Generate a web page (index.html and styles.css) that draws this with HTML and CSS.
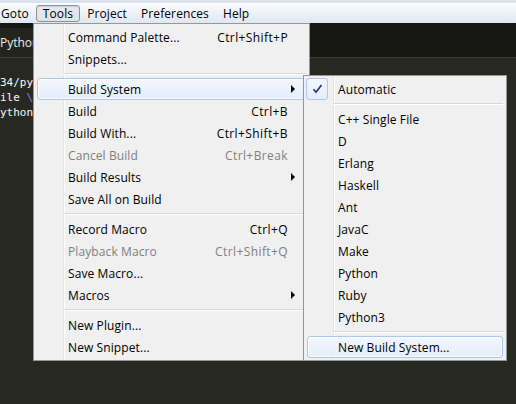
FILE: index.html
```html
<!DOCTYPE html>
<html>
<head>
<meta charset="utf-8">
<link rel="stylesheet" href="styles.css">
</head>
<body>
<div class="menubar">
  <span class="mb-item first">Goto</span>
  <span class="mb-item active">Tools</span>
  <span class="mb-item">Project</span>
  <span class="mb-item">Preferences</span>
  <span class="mb-item">Help</span>
</div>
<div class="tabbar">
  <div class="tab">Python</div>
</div>
<div class="editor">
  <div class="line">34/python</div>
  <div class="line">ile <span class="esc">\</span></div>
  <div class="line">ython</div>
</div>

<div class="menu main">
  <div class="item"><span class="label">Command Palette...</span><span class="key">Ctrl+Shift+P</span></div>
  <div class="item"><span class="label">Snippets...</span></div>
  <div class="sep"></div>
  <div class="item hl"><span class="label">Build System</span><span class="arrow"></span></div>
  <div class="item"><span class="label">Build</span><span class="key">Ctrl+B</span></div>
  <div class="item"><span class="label">Build With...</span><span class="key">Ctrl+Shift+B</span></div>
  <div class="item dis"><span class="label">Cancel Build</span><span class="key">Ctrl+Break</span></div>
  <div class="item"><span class="label">Build Results</span><span class="arrow"></span></div>
  <div class="item"><span class="label">Save All on Build</span></div>
  <div class="sep"></div>
  <div class="item"><span class="label">Record Macro</span><span class="key">Ctrl+Q</span></div>
  <div class="item dis"><span class="label">Playback Macro</span><span class="key">Ctrl+Shift+Q</span></div>
  <div class="item"><span class="label">Save Macro...</span></div>
  <div class="item"><span class="label">Macros</span><span class="arrow"></span></div>
  <div class="sep"></div>
  <div class="item"><span class="label">New Plugin...</span></div>
  <div class="item"><span class="label">New Snippet...</span></div>
</div>

<div class="menu sub">
  <div class="item checked"><span class="check"><svg width="11" height="10" viewBox="0 0 11 10"><path d="M1.5 5.2 L4 8.3 L9.5 1" fill="none" stroke="#1c2d8f" stroke-width="1.6"/></svg></span><span class="label">Automatic</span></div>
  <div class="sep"></div>
  <div class="item"><span class="label">C++ Single File</span></div>
  <div class="item"><span class="label">D</span></div>
  <div class="item"><span class="label">Erlang</span></div>
  <div class="item"><span class="label">Haskell</span></div>
  <div class="item"><span class="label">Ant</span></div>
  <div class="item"><span class="label">JavaC</span></div>
  <div class="item"><span class="label">Make</span></div>
  <div class="item"><span class="label">Python</span></div>
  <div class="item"><span class="label">Ruby</span></div>
  <div class="item"><span class="label">Python3</span></div>
  <div class="sep"></div>
  <div class="item hl"><span class="label">New Build System...</span></div>
</div>
</body>
</html>
```

FILE: styles.css
```css
html, body {
  margin: 0;
  padding: 0;
}
body {
  width: 516px;
  height: 404px;
  overflow: hidden;
  background: #272822;
  font-family: "Open Sans", "Noto Sans", sans-serif;
  font-size: 12px;
  color: #000;
  position: relative;
}
.menubar {
  height: 23px;
  display: flex;
  align-items: center;
  box-sizing: border-box;
  border-top: 3px solid #dae2ed;
  background: linear-gradient(#fbfcfe, #dfe7f2);
  box-shadow: inset 0 1px 0 #ffffff;
}
.mb-item {
  padding: 0 6px;
  height: 17px;
  line-height: 16px;
  box-sizing: border-box;
  border: 1px solid transparent;
  border-radius: 3px;
  letter-spacing: 0.1px;
}
.mb-item.first {
  margin-left: -6px;
}
.mb-item.active {
  border-color: #8d9197;
  background: linear-gradient(#e6ebf1, #dde3ea);
  box-shadow: inset 0 1px 1px rgba(0,0,0,0.12);
}
.tabbar {
  height: 35px;
  background: #171713;
  border-bottom: 1px solid #3c3c37;
  box-sizing: border-box;
  padding-top: 5px;
}
.tab {
  height: 29px;
  width: 60px;
  margin-left: -10px;
  padding-left: 10px;
  box-sizing: border-box;
  background: #24241f;
  color: #ecece6;
  line-height: 30px;
  font-size: 12px;
}
.editor {
  padding-top: 17px;
  font-family: "DejaVu Sans Mono", "Liberation Mono", monospace;
  font-size: 11px;
  line-height: 15px;
  color: #f8f8f2;
}
.line {
  white-space: pre;
}
.esc {
  color: #7b7bf0;
}
.menu {
  position: absolute;
  box-sizing: border-box;
  border: 1px solid #979797;
  padding: 2px 3px;
  background: linear-gradient(to right, transparent 29px, #e2e3e3 29px, #e2e3e3 30px, #ffffff 30px, #ffffff 31px, transparent 31px), #f0f0f0;
  background-clip: padding-box;
}
.menu.main {
  left: 33px;
  top: 23px;
  width: 277px;
  height: 338px;
}
.menu.sub {
  left: 303px;
  top: 75px;
  width: 204px;
  height: 286px;
}
.item {
  height: 22px;
  box-sizing: border-box;
  display: flex;
  align-items: center;
  padding: 0 18px 0 31px;
  position: relative;
  border: 1px solid transparent;
  border-radius: 3px;
  white-space: nowrap;
}
.item .label {
  flex: 1;
  margin-left: -1px;
  letter-spacing: 0.1px;
}
.item .key {
  margin-right: -1px;
  letter-spacing: 0.4px;
}
.item.dis {
  color: #808080;
}
.item.hl {
  border-color: #a9c8ee;
  background: linear-gradient(#f3f7fd, #e4edf9);
  box-shadow: inset 0 0 0 1px rgba(255,255,255,0.7);
}
.arrow {
  width: 0;
  height: 0;
  border-top: 4px solid transparent;
  border-bottom: 4px solid transparent;
  border-left: 4px solid #000;
  margin-right: -8px;
}
.sep {
  height: 8px;
  margin-left: 26px;
  box-sizing: border-box;
  padding-top: 3px;
}
.sep::before {
  content: "";
  display: block;
  height: 1px;
  background: #d7d7d7;
  border-bottom: 1px solid #ffffff;
}
.item.checked {
  padding-left: 0;
}
.check {
  width: 22px;
  height: 22px;
  box-sizing: border-box;
  margin: 0 11px 0 -2px;
  border: 1px solid #a9c8ee;
  border-radius: 3px;
  background: linear-gradient(#f3f7fd, #e4edf9);
  display: flex;
  align-items: center;
  justify-content: center;
}
```
